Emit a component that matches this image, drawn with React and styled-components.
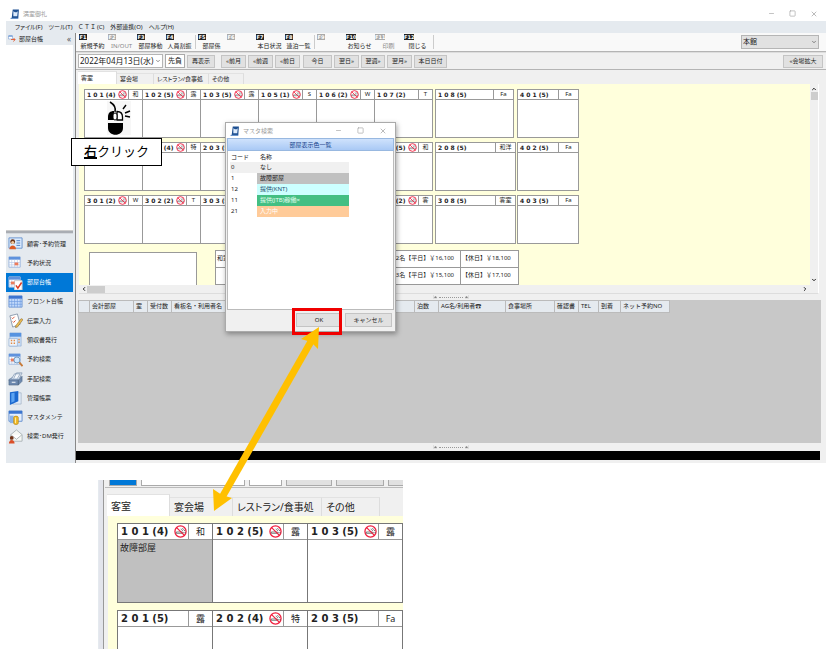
import { useState } from "react"
import styled, { createGlobalStyle, css } from "styled-components";
import { ChevronDown, ChevronUp, ChevronLeft, ChevronRight, Minus, Square, X } from "lucide-react";

const GlobalStyle = createGlobalStyle`
    * { box-sizing: border-box; }
    body {
        margin: 0;
        background: #fff;
        color: #222;
        font-family: "Noto Sans", "Noto Sans CJK JP", sans-serif;
        font-size: 6px;
        line-height: 8px;
    }
    button, select {
        margin: 0;
        padding: 0;
        border: 0;
        border-radius: 0;
        background: none;
        color: inherit;
        font: inherit;
        white-space: nowrap;
    }
    select { appearance: none; }
    table { border-collapse: collapse; }
    svg { display: block; flex: none; }
`;

const Page = styled.main`
    position: relative;
    padding: 6px 10px 6px 6px;
    overflow: hidden;
`;
const TitleBar = styled.header`
    display: flex;
    align-items: center;
    gap: 3px;
    height: 15px;
    padding: 0 8px 0 4px;
    color: #999;
`;
const WindowButtons = styled.div`
    display: flex;
    gap: ${({ $gap }) => $gap}px;
    margin-left: auto;
    color: #999;
`;
const MenuBar = styled.nav`
    display: flex;
    align-items: center;
    gap: 6px;
    height: 12px;
    padding-left: 9px;
    background: #e5eaef;
    font-feature-settings: "palt";
`;
const Body = styled.div`
    display: flex;
    height: 430px;
    background: #f0f0f0;
`;

/* left side */
const Sidebar = styled.aside`
    display: flex;
    flex-direction: column;
    flex: none;
    width: 70px;
    padding-right: 2px;
    background: #e5eaef;
    border-right: 1px solid #888;
`;
const SideHead = styled.div`
    display: flex;
    align-items: center;
    gap: 3px;
    height: 12px;
    padding: 0 2px 0 2px;
    span:last-child { margin-left: auto; color: #555; font-size: 8px; }
`;
const SideTree = styled.div`
    height: 186px;
    background: #fff;
    border-bottom: 1px solid #ccc;
`;
const SideGrip = styled.div`
    height: 3px;
    background: #a9adb3;
    border-bottom: 1px solid #d4d8dd;
`;
const SideNav = styled.nav`
    display: grid;
    grid-template-rows: repeat(11, 1fr);
    height: 212px;
`;
const NavItem = styled.button`
    display: flex;
    align-items: center;
    gap: 4px;
    padding-left: 2px;
    color: ${({ $active }) => ($active ? "#fff" : "#222")};
    background: ${({ $active }) => ($active ? "#0078d7" : "transparent")};
`;

/* toolbars */
const Main = styled.section`
    display: flex;
    flex-direction: column;
    flex: 1;
    min-width: 0;
`;
const KeyBar = styled.div`
    display: flex;
    align-items: center;
    height: 19px;
    padding: 0 7px 0 2px;
    background: #f9f9f9;
    border-bottom: 1px solid #b4b4b4;
`;
const KeyButton = styled.button`
    display: flex;
    flex-direction: column;
    align-items: center;
    width: 29px;
    height: 17px;
    color: ${({ $off }) => ($off ? "#888" : "#222")};
    kbd {
        align-self: flex-start;
        min-width: 8px;
        height: 6px;
        margin: 0 0 2px 1px;
        background: ${({ $off }) => ($off ? "#aaa" : "#222")};
        color: #fff;
        font: bold 5px/6px "DejaVu Sans", sans-serif;
    }
`;
const KeySeparator = styled.span`
    width: 1px;
    height: 14px;
    margin: 0 1px;
    background: #ccc;
`;
const SelectWrap = styled.span`
    display: flex;
    align-items: center;
    justify-content: flex-end;
    position: relative;
    width: ${({ $width }) => $width}px;
    height: 14px;
    margin-left: ${({ $right }) => ($right ? "auto" : 0)};
    background: ${({ $right }) => ($right ? "#e1e1e1" : "#fff")};
    border: 1px solid #b5b5b5;
    select {
        flex: 1;
        height: 12px;
        padding-left: 1px;
        font-size: ${({ $right }) => ($right ? 7 : 8)}px;
        line-height: 12px;
    }
    svg { padding: 1px; }
`;
const DateBar = styled.div`
    display: flex;
    align-items: center;
    gap: 2px;
    height: 18px;
    padding: 0 3px 0 2px;
    border-top: 1px solid #ddd;
    border-bottom: 1px solid #b4b4b4;
`;
const Luck = styled.output`
    width: 20px;
    height: 14px;
    background: #fff;
    border: 1px solid #aaa;
    font-size: 7px;
    line-height: 11px;
    text-align: center;
`;
const PushButton = styled.button`
    width: ${({ $width }) => $width}px;
    height: ${({ $height }) => $height || 13}px;
    margin-left: ${({ $gap }) => $gap || 0};
    background: #e1e1e1;
    border: 1px solid #c4c4c4;
`;

/* rooms */
const Tabs = styled.div`
    display: flex;
    align-items: flex-end;
    padding-left: 2px;
    height: ${({ $big }) => ($big ? 28 : 14)}px;
    background: #f0f0f0;
    font-feature-settings: "palt";
`;
const Tab = styled.button`
    width: ${({ $width }) => $width}px;
    height: ${({ $big, $active }) => ($big ? ($active ? 22 : 19) : ($active ? 13 : 11))}px;
    padding-left: ${({ $big }) => ($big ? 4 : 3)}px;
    text-align: left;
    font-size: ${({ $big }) => ($big ? 10 : 6)}px;
    line-height: ${({ $big }) => ($big ? 16 : 9)}px;
    background: ${({ $active }) => ($active ? "#fff" : "#f0f0f0")};
    border-right: 1px solid #ddd;
    border-top: 1px solid #e2e2e2;
`;
const Board = styled.div`
    display: grid;
    grid-template-columns: 1fr 8px;
    grid-template-rows: 201px 8px;
    margin: 0 7px 0 3px;
    border-right: 1px solid #fff;
    border-bottom: 1px solid #ddd;
`;
const Rooms = styled.div`
    display: flex;
    flex-direction: column;
    gap: 4px;
    padding: 5px 5px 0 5px;
    overflow: hidden;
    background: #ffffdc;
`;
const ScrollBar = styled.div`
    display: flex;
    flex-direction: ${({ $across }) => ($across ? "row" : "column")};
    align-items: center;
    padding: ${({ $across }) => ($across ? "0 2px" : "2px 0")};
    background: #f0f0f0;
    span {
        width: ${({ $across }) => ($across ? 18 : 7)}px;
        height: ${({ $across }) => ($across ? 7 : 8)}px;
        background: #cdcdcd;
    }
    svg:last-child {
        margin-top: ${({ $across }) => ($across ? 0 : "auto")};
        margin-left: ${({ $across }) => ($across ? "auto" : 0)};
    }
`;
const Floor = styled.div`
    display: grid;
    grid-template-columns: 349px 81px 62px;
    gap: 2px;
`;
const RoomGroup = styled.div`
    display: flex;
`;
const Room = styled.article`
    flex: none;
    width: ${({ $width }) => $width}px;
    height: ${({ $big }) => ($big ? 80 : 49)}px;
    background: ${({ $broken }) => ($broken ? "#c0c0c0" : "#fff")};
    border: 1px solid #999;
    & + & { margin-left: -1px; }
    p {
        margin: 0;
        padding: 1px 2px;
        font-size: 9px;
        line-height: 14px;
    }
    ${({ $big }) => $big && css`border-color: #777;`}
`;
const RoomHead = styled.h3`
    display: flex;
    align-items: center;
    height: ${({ $big }) => ($big ? 16 : 10)}px;
    margin: 0;
    padding-left: ${({ $big }) => ($big ? 3 : 2)}px;
    background: #fff;
    border-bottom: 1px solid #999;
    font: bold ${({ $big }) => ($big ? 10 : 6)}px/${({ $big }) => ($big ? 15 : 9)}px "DejaVu Sans", sans-serif;
    white-space: pre;
    svg { margin-left: auto; margin-right: 1px; }
    span {
        width: ${({ $type }) => $type}px;
        height: 100%;
        border-left: 1px solid #999;
        font-family: "Noto Sans", "Noto Sans CJK JP", sans-serif;
        font-size: ${({ $big }) => ($big ? 9 : 6)}px;
        font-weight: normal;
        text-align: center;
    }
    b + span { margin-left: auto; }
`;
const Bottom = styled.div`
    display: flex;
    align-items: flex-start;
    gap: 18px;
    margin: 2px 0 0 5px;
`;
const BlankBox = styled.div`
    flex: none;
    width: 108px;
    height: 60px;
    margin-top: 2px;
    background: #fff;
    border: 1px solid #999;
`;
const PriceTable = styled.table`
    flex: none;
    width: 304px;
    background: #fff;
    border: 1px solid #999;
    td {
        height: 17px;
        padding: 0 0 2px 1px;
        border-bottom: 1px solid #999;
        white-space: nowrap;
    }
    td:nth-child(2) { width: 200px; padding-right: 6px; text-align: right; }
    td:nth-child(3) { width: 58px; border-left: 1px solid #999; }
`;
const Splitter = styled.div`
    display: flex;
    align-items: center;
    justify-content: center;
    flex: none;
    height: ${({ $height }) => $height}px;
    color: #888;
    i {
        width: 24px;
        margin: 0 2px;
        border-top: 1px dotted #999;
    }
`;

/* guests */
const GuestArea = styled.div`
    flex: 1;
    margin: 0 5px 0 2px;
    overflow: hidden;
    background: #c8c8c8;
`;
const GuestTable = styled.table`
    width: 591px;
    table-layout: fixed;
    th {
        height: 12px;
        padding: 0 0 0 2px;
        background: #e5eaef;
        border: 1px solid #bbb;
        font-weight: normal;
        line-height: 9px;
        text-align: left;
        white-space: nowrap;
        overflow: hidden;
    }
`;
const StatusBar = styled.footer`
    height: 9px;
    margin: 0 6px 3px 0;
    background: #000;
`;

/* search dialog */
const Dialog = styled.section`
    position: absolute;
    left: 225px;
    top: 122px;
    width: 171px;
    padding: 0 1px;
    background: #f0f0f0;
    border: 1px solid #aaa;
    box-shadow: 1px 2px 5px rgba(0, 0, 0, 0.35);
`;
const DialogTitle = styled(TitleBar)`
    margin: 0 -1px;
    background: #fff;
`;
const DialogHead = styled.h2`
    height: 13px;
    margin: 0;
    background: linear-gradient(#cfe2fc, #a9c9f5);
    border: 1px solid #98b8e0;
    color: #15428b;
    font-size: 6px;
    font-weight: normal;
    line-height: 12px;
    text-align: center;
`;
const DialogList = styled.div`
    height: 159px;
    padding: 2px 0 0 2px;
    background: #fff;
    border: 1px solid #bbb;
    border-top: 0;
`;
const ColorTable = styled.table`
    width: 119px;
    height: 64px;
    th, td {
        padding: 0 0 0 3px;
        font-weight: normal;
        line-height: 9px;
        text-align: left;
    }
    th:first-child, td:first-child { width: 27px; padding-left: 1px; }
`;
const ColorRow = styled.tr`
    background: ${({ $selected }) => ($selected ? "#f0f0f0" : "#fff")};
    td + td {
        background: ${({ $fill }) => $fill};
        color: ${({ $ink }) => $ink};
    }
`;
const DialogButtons = styled.div`
    display: flex;
    justify-content: flex-end;
    gap: 3px;
    padding: 3px 2px 4px;
`;

/* marks over the window */
const Callout = styled.div`
    position: absolute;
    left: 71px;
    top: 138px;
    width: 91px;
    height: 28px;
    background: #fff;
    border: 1px solid #000;
    color: #000;
    font-size: 13px;
    line-height: 25px;
    text-align: center;
    u {
        font-weight: 500;
        text-decoration-thickness: 2px;
        text-underline-offset: 1px;
    }
`;
const MouseMark = styled.svg`
    position: absolute;
    left: 107px;
    top: 100px;
`;
const RedFrame = styled.div`
    position: absolute;
    left: 292px;
    top: 308px;
    width: 50px;
    height: 27px;
    border: 3px solid #f00000;
`;
const Arrow = styled.svg`
    position: absolute;
    left: 205px;
    top: 320px;
`;

/* enlarged part under the window */
const Closeup = styled.section`
    width: 305px;
    height: 169px;
    margin: 17px 0 0 92px;
    padding-left: 6px;
    overflow: hidden;
    background: #f0f0f0;
    border-left: 1px solid #e5eaef;
    box-shadow: inset 4px 0 #e3e5ec, inset 5px 0 #999;
`;
const CutBar = styled.div`
    display: flex;
    gap: 4px;
    height: 8px;
    padding-left: 4px;
    border-bottom: 1px solid #bbb;
`;
const CutBox = styled.span`
    flex: none;
    width: ${({ $width }) => $width}px;
    height: 6px;
    background: ${({ $fill }) => $fill || "#fff"};
    border: 1px solid #aaa;
    border-top: 0;
`;
const CloseRooms = styled(Rooms)`
    gap: 7px;
    height: 133px;
    margin-left: 3px;
    padding: 7px 0 0 9px;
`;

const menus = ["ファイル(F)", "ツール(T)", "Ｃ Ｔ Ｉ (C)", "外部連携(O)", "ヘルプ(H)"];
const keys = [
    ["F1", "新規予約"], ["F2", "IN/OUT", true], ["F3", "部屋移動"], ["F4", "人員割振"], null,
    ["F5", "部屋係"], ["F6", "", true], ["F7", "本日状況"], ["F8", "連泊一覧"], null,
    ["F9", "", true], ["F10", "お知らせ"], ["F11", "印刷", true], ["F12", "閉じる"], null,
];
const moves = [["«前月", 25, "4px"], ["«前週", 25], ["«前日", 25], ["今日", 29, "1px"], ["翌日»", 25], ["翌週»", 24], ["翌月»", 25], ["本日日付", 33]];
const navItems = ["顧客･予約管理", "予約状況", "部屋台帳", "フロント台帳", "伝票入力", "領収書発行", "予約検索", "手配検索", "管理帳票", "マスタメンテ", "検索･DM発行"];
const tabs = [["客室", 39, 63], ["宴会場", 37, 63], ["レストラン/食事処", 55, 89], ["その他", 35, 58]];

// [number, type, smoke free]
const floors = [
    [
        [["1 0 1 (4)", "和", true], ["1 0 2 (5)", "露", true], ["1 0 3 (5)", "露", true], ["1 0 5 (1)", "S", true], ["1 0 6 (2)", "W", true], ["1 0 7 (2)", "T"]],
        ["1 0 8 (5)", "Fa", 79], ["4 0 1 (5)", "Fa", 62],
    ],
    [
        [["2 0 1 (5)", "露"], ["2 0 2 (4)", "特", true], ["2 0 3 (5)", "Fa"], ["2 0 5 (1)", "S", true], ["2 0 6 (2)", "W", true], ["2 0 7 (5)", "和", true]],
        ["2 0 8 (5)", "和洋", 81], ["4 0 2 (5)", "Fa", 62],
    ],
    [
        [["3 0 1 (2)", "W", true], ["3 0 2 (2)", "T", true], ["3 0 3 (5)", "露"], ["3 0 5 (1)", "S", true], ["3 0 6 (2)", "W", true], ["3 0 7 (2)", "客", true]],
        ["3 0 8 (5)", "客室", 81], ["4 0 3 (5)", "Fa", 62],
    ],
];
const guestColumns = [["", 11], ["会計部屋", 44], ["室", 14], ["受付数", 24], ["看板名・利用者名", 54], ["", 189], ["泊数", 24], ["AG名/利用者☎", 67], ["食事場所", 49], ["確認書", 24], ["TEL", 20], ["到着", 22], ["ネット予約NO", 49]];
const colors = [
    ["0", "なし", "transparent", "#222"],
    ["1", "故障部屋", "#c0c0c0", "#222"],
    ["12", "提供(KNT)", "#ccffff", "#1f4f70"],
    ["11", "提供(JTB)稼働×", "#43bf83", "#e8fff2"],
    ["21", "入力中", "#ffcb99", "#fff"],
];

const NoSmoking = ({ size }) => (
    <svg width={size} height={size} viewBox="0 0 14 14" fill="none">
        <circle cx="7" cy="7" r="6" fill="#fff" stroke="#f0203f" strokeWidth="1.4" />
        <path d="M2.500 7.500h6.500v1.500H2.500zM10.500 7.500v1.500M12 7.500v1.500" stroke="#444" strokeWidth=".7" />
        <path d="M9.500 6.500c0-1.500-2-1-2-2.500M11.500 6.500c0-2-2-1.500-2.500-3" stroke="#555" strokeWidth=".8" />
        <path d="M2.800 2.800 11.200 11.200" stroke="#f0203f" strokeWidth="1.300" />
    </svg>
);

const AppLogo = () => (
    <svg width="10" height="10" viewBox="0 0 16 18">
        <path d="M4 1h11l-1 15H2z" fill="#1d4f91" />
        <path d="M5 4l3 2h3l2-2-1 9H5z" fill="#dceafb" />
        <path d="M0 16h14v2H0z" fill="#6a94cb" />
    </svg>
);

const sheet = <><path d="M1 2h12v11H1z" fill="#fff" stroke="#9db7dd" /><path d="M1 2h12v3H1z" fill="#5f92dd" /><path d="M1 8h12M1 10.500h12M4 5v8M7 5v8M10 5v8" stroke="#b6caeb" strokeWidth=".7" /></>;
const navDrawings = [
    <><path d="M1 2h14v11H1z" fill="#dcebfd" stroke="#6994cf" /><path d="M9 5h4M9 7.500h4M9 10h4" stroke="#4b7dc4" /><circle cx="5" cy="6" r="2.600" fill="#6b3315" /><circle cx="5" cy="7" r="1.600" fill="#f4c9a0" /><path d="M1.500 14c0-5 7-5 7 0z" fill="#dd5b28" /></>,
    <>{sheet}<path d="M7 8h4v3H7z" fill="#ed7b5a" /></>,
    <>{sheet}<path d="M7 6h8v10H7z" fill="#fff" stroke="#ccc" /><path d="M3 7h4v3H3z" fill="#ed7b5a" /><path d="m8.500 11 2 3 4-6" fill="none" stroke="#df3c22" strokeWidth="1.600" /></>,
    <><path d="M1 2h14v12H1z" fill="#c3dafb" stroke="#7097d4" /><path d="M1 2h14v3H1z" fill="#3d74d0" /><path d="M4 5v9M7 5v9M10 5v9M13 5v9M1 8h14M1 11h14" stroke="#6f9be0" strokeWidth=".7" /></>,
    <><path d="m2 3 8-2 3 11-8 3z" fill="#fff" stroke="#8c9aae" /><path d="m4 5 1 1 2-2M5 9l1 1 2-2" fill="none" stroke="#db4c2e" /><path d="m14 6 2 1-6 8-2 .500.300-2z" fill="#eebe54" stroke="#8a6520" strokeWidth=".6" /></>,
    <><path d="M2 1h12v14H2z" fill="#c9def7" stroke="#8fadd2" strokeWidth=".7" /><path d="M2 1h12v4H2z" fill="#5793e0" /><path d="M1 7h9v8H1z" fill="#eef4fb" stroke="#8fadd2" strokeWidth=".7" /><path d="M3 9h1.500M6 9h1.500M3 12h1.500M6 12h1.500M11 8h1.500M11 11h1.500" stroke="#e28a46" strokeWidth="1.500" /></>,
    <>{sheet}<path d="M3 7h4v3H3z" fill="#ed7b5a" /><circle cx="9.500" cy="8.500" r="3.200" fill="#cfe8ff" stroke="#6e96bd" /><path d="m12 11 3.500 4" stroke="#c77a38" strokeWidth="2" /></>,
    <><path d="m1 9 5-3h9l-4 4H1z" fill="#9fb6d4" stroke="#5f7696" strokeWidth=".6" /><path d="M1 9.500h10V15H1zM11 10l4-4v5l-4 4z" fill="#6d89af" stroke="#4e6583" strokeWidth=".6" /><path d="m4 8 3-5h6l-3 5M6 8l3-6h6l-3 6" fill="#f3f7fc" stroke="#7189a8" strokeWidth=".7" /><path d="M4 12h4" stroke="#fff" /></>,
    <><path d="M8 3h6v12H5z" fill="#e2ebf7" stroke="#9aabc2" strokeWidth=".7" /><path d="M2 2.500 11 1v11l-9 4z" fill="#1c69cf" /><path d="M3.500 3.500 7 3v9l-3.500 1.500z" fill="#5ba3f2" /></>,
    <><path d="M1 1h14v11H1z" fill="#e4effd" stroke="#6490cf" /><path d="M1 1h14v3H1z" fill="#3b75cf" /><path d="M2 6h4v8H2z" fill="#8bb3e8" /><path d="M6 8c0-2 5-2 5 0v6c0 2-5 2-5 0z" fill="#f0b928" stroke="#a87b10" strokeWidth=".6" /><path d="M8 8v6" stroke="#fff0a8" /></>,
    <><path d="m3 6 6-5 6 5v7H3z" fill="#f6f8f5" stroke="#9ba6a8" strokeWidth=".8" /><path d="m3 6 6 5 6-5" fill="#fff" stroke="#9ba6a8" strokeWidth=".8" /><circle cx="4" cy="9.500" r="2" fill="#73351a" /><path d="M1 15.500c0-5 6-5 6 0z" fill="#db4f28" /></>,
];

const RoomCell = ({ room, width, type = 14, big, broken }) => (
    <Room $width={width} $big={big} $broken={broken}>
        <RoomHead $type={type} $big={big}>
            <b>{room[0]}</b>
            {room[2] === true && <NoSmoking size={big ? 13 : 9} />}
            <span>{room[1]}</span>
        </RoomHead>
        {broken && <p>故障部屋</p>}
    </Room>
);

const TabStrip = ({ big, value, onChange }) => (
    <Tabs role="tablist" $big={big}>
        {tabs.map(([label, width, bigWidth]) => (
            <Tab
                key={label}
                role="tab"
                aria-selected={value === label}
                $big={big}
                $active={value === label}
                $width={big ? bigWidth : width}
                onClick={() => onChange(label)}
            >
                {label}
            </Tab>
        ))}
    </Tabs>
);

const Controls = ({ gap }) => (
    <WindowButtons $gap={gap}>
        <button aria-label="最小化"><Minus size={7} /></button>
        <button aria-label="最大化"><Square size={7} /></button>
        <button aria-label="閉じる"><X size={8} /></button>
    </WindowButtons>
);

const SplitGrip = ({ height }) => (
    <Splitter $height={height}>
        <svg width="4" height="4" viewBox="0 0 4 4"><path d="M0 0v4M1 3h3L2.500 1z" fill="#777" stroke="#aaa" strokeWidth=".5" /></svg>
        <i />
        <svg width="4" height="4" viewBox="0 0 4 4"><path d="M4 0v4M0 3h3L1.500 1z" fill="#777" stroke="#aaa" strokeWidth=".5" /></svg>
    </Splitter>
);

const SearchDialog = () => {
    const [selected, setSelected] = useState("0");

    return (
        <Dialog role="dialog" aria-label="マスタ検索">
            <DialogTitle><AppLogo />マスタ検索<Controls gap={15} /></DialogTitle>
            <DialogHead>部屋表示色一覧</DialogHead>
            <DialogList>
                <ColorTable>
                    <thead><tr><th>コード</th><th>名称</th></tr></thead>
                    <tbody>
                        {colors.map(([code, name, fill, ink]) => (
                            <ColorRow key={code} $fill={fill} $ink={ink} $selected={selected === code} onClick={() => setSelected(code)}>
                                <td>{code}</td>
                                <td>{name}</td>
                            </ColorRow>
                        ))}
                    </tbody>
                </ColorTable>
            </DialogList>
            <DialogButtons>
                <PushButton $width={46} $height={14}>OK</PushButton>
                <PushButton $width={47} $height={14}>キャンセル</PushButton>
            </DialogButtons>
        </Dialog>
    )
}

export default function App() {
    const [tab, setTab] = useState("客室");
    const [page, setPage] = useState("部屋台帳");

    return (
        <Page lang="ja">
            <GlobalStyle />
            <TitleBar><AppLogo />満室御礼<Controls gap={14} /></TitleBar>
            <MenuBar>
                {menus.map((menu) => <button key={menu}>{menu}</button>)}
            </MenuBar>
            <Body>
                <Sidebar>
                    <SideHead>
                        <svg width="8" height="8" viewBox="0 0 16 16">
                            <path d="M1 2h8v6H1z" fill="#fff" stroke="#6c94cf" /><path d="M1 1h8v2H1z" fill="#4f82cc" />
                            <path d="M6 9h8l-3-3M14 9l-3 4" fill="none" stroke="#e0633c" strokeWidth="2" />
                        </svg>
                        <span>部屋台帳</span>
                        <span>«</span>
                    </SideHead>
                    <SideTree />
                    <SideGrip />
                    <SideNav>
                        {navItems.map((item, i) => (
                            <NavItem key={item} $active={page === item} onClick={() => setPage(item)}>
                                <svg width="15" height="15" viewBox="0 0 16 16">{navDrawings[i]}</svg>
                                {item}
                            </NavItem>
                        ))}
                    </SideNav>
                </Sidebar>
                <Main>
                    <KeyBar>
                        {keys.map((key, i) => key ? (
                            <KeyButton key={key[0]} $off={key[2]}><kbd>{key[0]}</kbd>{key[1]}</KeyButton>
                        ) : <KeySeparator key={i} />)}
                        <SelectWrap $width={78} $right>
                            <select aria-label="館"><option>本館</option></select>
                            <ChevronDown size={8} />
                        </SelectWrap>
                    </KeyBar>
                    <DateBar>
                        <SelectWrap $width={85}>
                            <select aria-label="日付"><option>2022年04月13日(水)</option></select>
                            <ChevronDown size={8} />
                        </SelectWrap>
                        <Luck>先負</Luck>
                        <PushButton $width={28}>再表示</PushButton>
                        {moves.map(([label, width, gap]) => (
                            <PushButton key={label} $width={width} $gap={gap}>{label}</PushButton>
                        ))}
                        <PushButton $width={40} $gap="auto">«会場拡大</PushButton>
                    </DateBar>
                    <TabStrip value={tab} onChange={setTab} />
                    <Board>
                        <Rooms>
                            {floors.map(([group, side, annex]) => (
                                <Floor key={side[0]}>
                                    <RoomGroup>
                                        {group.map((room) => <RoomCell key={room[0]} room={room} width={59} />)}
                                    </RoomGroup>
                                    <RoomCell room={side} width={side[2]} type={20} />
                                    <RoomCell room={annex} width={annex[2]} type={20} />
                                </Floor>
                            ))}
                            <Bottom>
                                <BlankBox />
                                <PriceTable>
                                    <tbody>
                                        <tr><td>和室</td><td>2名【平日】￥16,100</td><td>【休日】￥18,100</td></tr>
                                        <tr><td /><td>3名【平日】￥15,100</td><td>【休日】￥17,100</td></tr>
                                    </tbody>
                                </PriceTable>
                            </Bottom>
                        </Rooms>
                        <ScrollBar>
                            <ChevronUp size={6} strokeWidth={4} />
                            <span />
                            <ChevronDown size={6} strokeWidth={4} />
                        </ScrollBar>
                        <ScrollBar $across>
                            <ChevronLeft size={6} strokeWidth={4} />
                            <span />
                            <ChevronRight size={6} strokeWidth={4} />
                        </ScrollBar>
                    </Board>
                    <SplitGrip height={6} />
                    <GuestArea>
                        <GuestTable>
                            <colgroup>
                                {guestColumns.map(([, width], i) => <col key={i} width={width} />)}
                            </colgroup>
                            <thead>
                                <tr>{guestColumns.map(([name], i) => <th key={i}>{name}</th>)}</tr>
                            </thead>
                        </GuestTable>
                    </GuestArea>
                    <SplitGrip height={8} />
                    <StatusBar />
                </Main>
            </Body>

            <Closeup>
                <CutBar>
                    <CutBox $width={28} $fill="#0078d7" />
                    <CutBox $width={104} />
                    <CutBox $width={33} />
                    <CutBox $width={46} $fill="#e1e1e1" />
                    <CutBox $width={48} $fill="#e1e1e1" />
                    <CutBox $width={48} $fill="#e1e1e1" />
                </CutBar>
                <TabStrip big value={tab} onChange={setTab} />
                <CloseRooms>
                    <RoomGroup>
                        {floors[0][0].slice(0, 3).map((room, i) => (
                            <RoomCell key={room[0]} room={room} width={96} type={24} big broken={i === 0} />
                        ))}
                    </RoomGroup>
                    <RoomGroup>
                        {floors[1][0].slice(0, 3).map((room) => (
                            <RoomCell key={room[0]} room={room} width={96} type={24} big />
                        ))}
                    </RoomGroup>
                </CloseRooms>
            </Closeup>

            <MouseMark width="24" height="36" viewBox="0 0 24 36" fill="none">
                <path d="M0 1h24v34H0z" fill="#f7f7f7" />
                <path d="M3 2c5 3 6 6 5 10" stroke="#000" strokeWidth="1.500" />
                <path d="M1 20v-3c0-4 2-6 6-6v9zM1 23h15v5c0 9-15 9-15 0z" fill="#000" />
                <path d="M10 11.500c4 0 5.500 2 5.500 5.500v3H10z" fill="#fff" stroke="#000" strokeWidth="1.300" />
                <rect x="6" y="13" width="4" height="7" rx="2" fill="#fff" stroke="#000" />
                <path d="m16 9 3-4M18 13l5-2M18 16l5 1" stroke="#000" strokeWidth="1.400" />
            </MouseMark>
            <Callout><u>右</u>クリック</Callout>
            <SearchDialog />
            <RedFrame />
            <Arrow width="122" height="196" viewBox="0 0 122 196">
                <path d="M15 181 108 18" stroke="#ffc000" strokeWidth="7" />
                <path d="M114 7 96 19 106 22 113 29zM9 191 8 169 17 175 27 178z" fill="#ffc000" />
            </Arrow>
        </Page>
    )
}
